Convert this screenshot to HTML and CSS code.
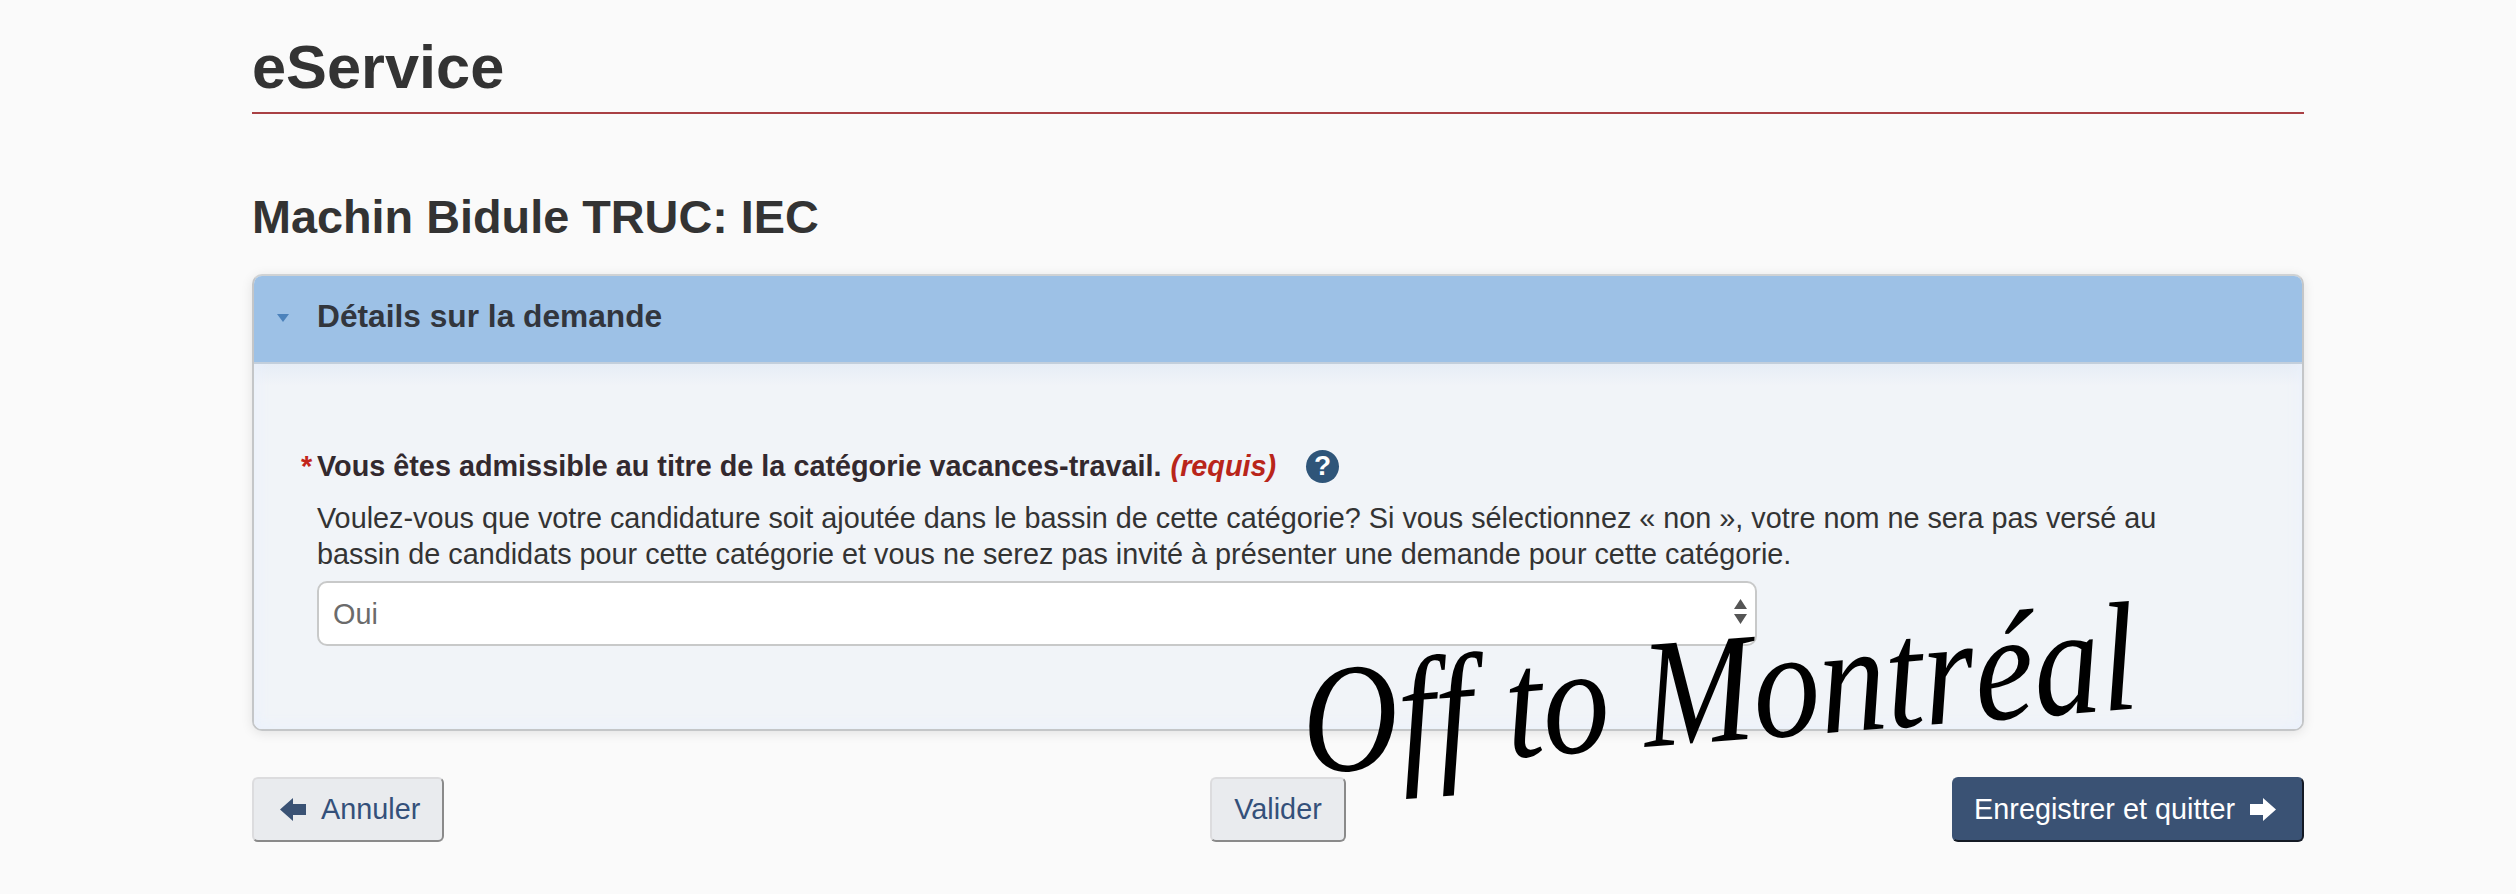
FILE: index.html
```html
<!DOCTYPE html>
<html lang="fr">
<head>
  <meta charset="UTF-8">
  <meta name="viewport" content="width=device-width, initial-scale=1.0">
  <title>eService</title>
  <link rel="stylesheet" href="styles.css">
</head>
<body>

  <div class="page">
    <header class="site-header">
      <div class="site-name">eService</div>
    </header>

    <h1 class="page-title">Machin Bidule TRUC: IEC</h1>

    <!-- Panneau de la demande -->
    <section class="panel">
      <div class="panel-head">
        <span class="caret"></span>
        <h2>Détails sur la demande</h2>
      </div>
      <div class="panel-body">
        <div class="question">
          <span class="star">*</span>
          <label for="iec">Vous êtes admissible au titre de la catégorie vacances-travail.</label>
          <em class="required">(requis)</em>
          <span class="help">?</span>
        </div>
        <p class="hint">Voulez-vous que votre candidature soit ajoutée dans le bassin de cette catégorie? Si vous sélectionnez « non », votre nom ne sera pas versé au bassin de candidats pour cette catégorie et vous ne serez pas invité à présenter une demande pour cette catégorie.</p>
        <div class="select-wrap">
          <select id="iec" class="select">
            <option>Oui</option>
            <option>Non</option>
          </select>
          <svg class="select-arrows" width="13" height="25" viewBox="0 0 13 25">
            <path d="M6.5 0L13 10H0Z M0 15H13L6.5 25Z" fill="#555"/>
          </svg>
        </div>
      </div>
    </section>

    <!-- Boutons -->
    <div class="actions">
      <div class="actions-left">
        <button class="btn">
          <svg class="arrow arrow-back" width="26" height="23" viewBox="0 0 26 23"><path d="M0 11.5L13 0V6H26V17H13V23Z" fill="#3a5274"/></svg>
          Annuler
        </button>
      </div>
      <button class="btn">Valider</button>
      <div class="actions-right">
        <button class="btn btn-primary">
          Enregistrer et quitter
          <svg class="arrow arrow-next" width="26" height="23" viewBox="0 0 26 23"><path d="M26 11.5L13 0V6H0V17H13V23Z" fill="#fff"/></svg>
        </button>
      </div>
    </div>
  </div>

  <div class="stamp">Off to Montréal</div>

</body>
</html>
```

FILE: styles.css
```css
/* Global */
body {
  margin: 0;
  background-color: #fafafa;
  color: #333;
  font-family: "Liberation Sans", Arial, sans-serif;
  font-size: 28.8px;
}

.page {
  margin: 0 212px 0 252px;
  padding-top: 32px;
}

/* En-tete */
.site-header {
  border-bottom: 2px solid #a94044;
  height: 80px;
}

.site-name {
  font-size: 61.3px;
  font-weight: bold;
  line-height: 70px;
  color: #333;
}

.page-title {
  margin: 73px 0 0;
  font-size: 46.8px;
  line-height: 60px;
  color: #333;
}

/* Panneau */
.panel {
  margin-top: 27px;
  border: 2px solid #c4c6c8;
  border-top-color: #cfd2d4;
  border-radius: 10px;
  background-color: #f1f4f8;
  box-shadow: 0 2px 12px rgba(0, 0, 0, 0.1);
}

.panel-head {
  display: flex;
  align-items: center;
  box-sizing: border-box;
  height: 88px;
  padding-bottom: 5px;
  border-bottom: 2px solid #c3cfdc;
  border-radius: 8px 8px 0 0;
  background-color: #9dc1e6;
}

.panel-head h2 {
  margin: 0;
  font-size: 31.7px;
  font-weight: bold;
  color: #32363d;
}

.caret {
  width: 0;
  height: 0;
  margin: 2px 28px 0 23px;
  border-top: 8px solid #4c82bb;
  border-left: 6px solid transparent;
  border-right: 6px solid transparent;
}

.panel-body {
  padding: 84px 63px 83px;
  background: linear-gradient(#e6edf6, #f1f4f8 22px);
  border-radius: 0 0 8px 8px;
  box-shadow: inset 0 -14px 16px -12px #ebf1fc, inset 14px 0 16px -12px #ebf1fc, inset -14px 0 16px -12px #ebf1fc;
}

.question {
  display: flex;
  align-items: center;
  height: 36px;
  font-weight: bold;
  color: #33292e;
}

.star {
  margin-left: -16px;
  width: 16px;
  color: #c3251b;
}

.required {
  margin-left: 9px;
  color: #b9251a;
}

.help {
  display: flex;
  justify-content: center;
  align-items: center;
  width: 33px;
  height: 33px;
  margin-left: 30px;
  border-radius: 50%;
  background-color: #2f5579;
  color: #fff;
  font-size: 28px;
}

.hint {
  margin: 16px 0 9px;
  line-height: 36px;
  color: #333;
}

.select-wrap {
  position: relative;
  width: 1440px;
}

.select {
  display: block;
  width: 100%;
  height: 65px;
  padding: 0 14px;
  box-sizing: border-box;
  appearance: none;
  border: 2px solid #c8c9c9;
  border-radius: 10px;
  background-color: #fff;
  color: #6b6b6b;
  font-family: inherit;
  font-size: 28.8px;
}

.select-arrows {
  position: absolute;
  top: 18px;
  right: 10px;
}

/* Boutons */
.actions {
  display: grid;
  grid-template-columns: 1fr auto 1fr;
  align-items: center;
  margin-top: 46px;
}

.actions-right {
  display: flex;
  justify-content: flex-end;
}

.btn {
  display: inline-flex;
  align-items: center;
  gap: 15px;
  height: 65px;
  padding: 0 22px;
  border: 2px solid #dcdcde;
  border-right-color: #8a8a8a;
  border-bottom-color: #8a8a8a;
  border-radius: 6px;
  background-color: #e9ebee;
  color: #34507a;
  font-family: inherit;
  font-size: 28.8px;
}

.arrow-back {
  margin-left: 4px;
}

.arrow-next {
  margin-right: 4px;
}

.btn-primary {
  padding-left: 20px;
  border-color: #3a5274;
  border-right-color: #141a24;
  border-bottom-color: #141a24;
  background-color: #3a5274;
  color: #fff;
}

/* Texte manuscrit par-dessus la page */
.stamp {
  position: absolute;
  left: 1302px;
  top: 622px;
  font-family: "Liberation Serif", serif;
  font-style: italic;
  font-size: 155px;
  line-height: 200px;
  white-space: nowrap;
  color: #000;
  transform: rotate(-4.5deg) scaleX(0.86);
  transform-origin: left center;
}
```
